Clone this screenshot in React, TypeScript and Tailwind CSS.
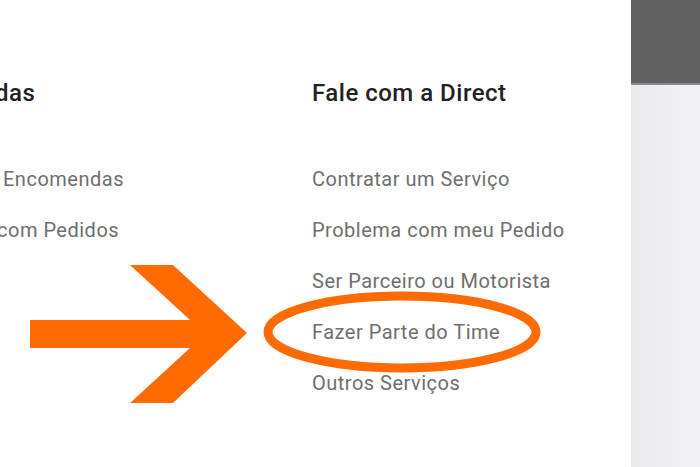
const rightLinks = [
  'Contratar um Serviço',
  'Problema com meu Pedido',
  'Ser Parceiro ou Motorista',
  'Fazer Parte do Time',
  'Outros Serviços',
];

// só a parte visível da coluna anterior (está cortada pela borda da tela)
const leftLinks = [
  { text: 'Encomendas', pad: 'ml-[3px]' },
  { text: 'com Pedidos', pad: '-ml-[3px]' },
];

export default function App() {
  return (
    <div
      className="relative w-[700px] h-[467px] overflow-hidden flex bg-white"
      style={{ fontFamily: 'Roboto, "Liberation Sans", sans-serif' }}
    >
      <div className="flex-1 flex pt-[77px] tracking-[0.5px]">
        {/* Coluna anterior */}
        <div className="flex flex-col w-[312px]">
          <div className="-ml-[5px] h-[32px] text-[24px] leading-[32px] font-medium text-[#222] whitespace-nowrap">
            das
          </div>
          <div className="flex flex-col mt-[45px]">
            {leftLinks.map((l) => (
              <div
                key={l.text}
                className={`${l.pad} h-[51px] text-[20px] leading-[51px] text-[#6e6e6e] whitespace-nowrap`}
              >
                {l.text}
              </div>
            ))}
          </div>
        </div>

        {/* Fale com a Direct */}
        <div className="flex flex-col">
          <h3 className="h-[32px] text-[24px] leading-[32px] font-medium text-[#222] whitespace-nowrap">
            Fale com a Direct
          </h3>
          <ul className="flex flex-col mt-[45px]">
            {rightLinks.map((link) => (
              <li
                key={link}
                className="h-[51px] text-[20px] leading-[51px] text-[#6e6e6e] whitespace-nowrap"
              >
                {link}
              </li>
            ))}
          </ul>
        </div>
      </div>

      {/* Painel lateral */}
      <div className="w-[69px] flex flex-col">
        <div className="h-[83px] bg-[#616161]" />
        <div className="h-[2px] bg-[#8a8a8a]" />
        <div className="flex-1 bg-gradient-to-r from-[#ebebef] to-[#f2f2f6]" />
      </div>

      {/* Anotação: seta e elipse */}
      <svg className="absolute inset-0 pointer-events-none" width="700" height="467" viewBox="0 0 700 467">
        <polygon
          fill="#ff6b00"
          points="30,320 190,320 130,265 173,265 247,333 173,403 130,403 190,348 30,348"
        />
        <ellipse cx="402" cy="332" rx="134" ry="36" fill="none" stroke="#ff6b00" strokeWidth="9" />
      </svg>
    </div>
  );
}
